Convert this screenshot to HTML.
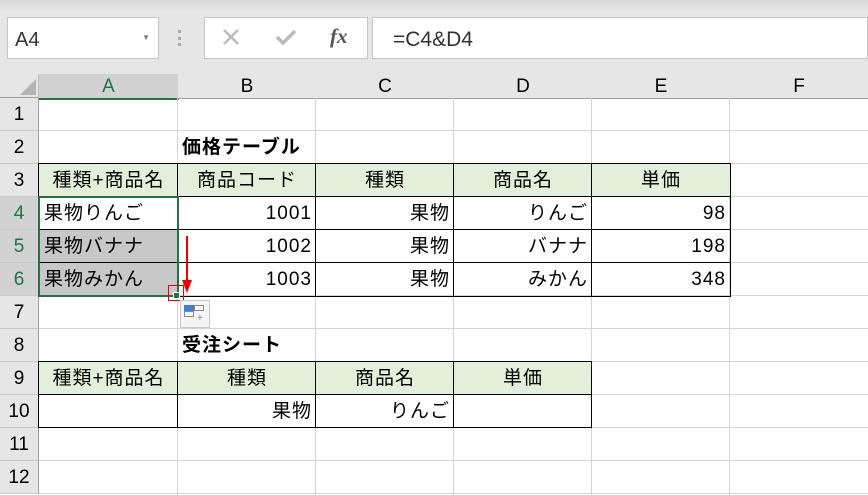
<!DOCTYPE html><html><head><meta charset="utf-8"><style>
body{margin:0;width:868px;height:495px;overflow:hidden;background:#fff;font-family:"Liberation Sans","Noto Sans CJK JP",sans-serif;position:relative}
.a{position:absolute;box-sizing:border-box}
.t{position:absolute;box-sizing:border-box;font-size:19px;line-height:33px;height:33px;white-space:nowrap;color:#000;padding:0 4px;letter-spacing:1px}
.ch{position:absolute;top:74px;height:24px;line-height:25px;text-align:center;font-size:19px;border-right:1px solid #bdbdbd;border-bottom:1px solid #9e9e9e;background:#e6e6e6}
.rh{position:absolute;left:0;width:39px;height:33px;line-height:33px;text-align:center;font-size:19px;background:#e6e6e6;border-bottom:1px solid #c8c8c8;border-right:1px solid #9e9e9e;box-sizing:border-box}
.hv{position:absolute;top:98px;width:1px;height:397px;background:#d4d4d4}
.hh{position:absolute;left:39px;width:829px;height:1px;background:#d4d4d4}
</style></head><body>
<div class="a" style="left:0;top:0;width:868px;height:74px;background:linear-gradient(#d9d9d9,#e6e6e6 12px)"></div>
<div class="a" style="left:7px;top:17px;width:152px;height:42px;background:#fff;border:1px solid #c6c6c6;font-size:20px;line-height:44px;padding-left:7px;color:#333">A4<span style="position:absolute;right:8px;top:0;font-size:8px;line-height:40px;color:#777">▼</span></div>
<div class="a" style="left:178px;top:30px;width:3px;height:16px;border-left:3px dotted #aaa"></div>
<div class="a" style="left:204px;top:17px;width:164px;height:42px;background:#fff;border:1px solid #c6c6c6"></div>
<svg class="a" style="left:223px;top:29px" width="16" height="16"><path d="M1 1L15 15M15 1L1 15" stroke="#bbb" stroke-width="2.5"/></svg>
<svg class="a" style="left:276px;top:29px" width="20" height="16"><path d="M1 8L7 14L19 2" stroke="#bbb" stroke-width="3.5" fill="none"/></svg>
<div class="a" style="left:330px;top:24px;font-size:21px;font-family:'Liberation Serif',serif;font-style:italic;font-weight:bold;color:#555">fx</div>
<div class="a" style="left:372px;top:17px;width:496px;height:42px;background:#fff;border:1px solid #c6c6c6;font-size:21px;line-height:44px;padding-left:20px;color:#333">=C4&amp;D4</div>
<div class="a" style="left:0;top:74px;width:39px;height:24px;background:#e6e6e6;border-right:1px solid #bdbdbd;border-bottom:1px solid #9e9e9e"></div>
<div class="a" style="left:20px;top:79px;width:0;height:0;border-left:16px solid transparent;border-bottom:16px solid #b4b4b4"></div>
<div class="ch" style="left:39px;width:139px;background:#d2d2d2;color:#217346;border-bottom:2px solid #217346">A</div>
<div class="ch" style="left:178px;width:138px">B</div>
<div class="ch" style="left:316px;width:138px">C</div>
<div class="ch" style="left:454px;width:138px">D</div>
<div class="ch" style="left:592px;width:138px">E</div>
<div class="ch" style="left:730px;width:138px">F</div>
<div class="rh" style="top:98px">1</div><div class="rh" style="top:131px">2</div><div class="rh" style="top:164px">3</div>
<div class="rh" style="top:197px;background:#d2d2d2;color:#217346">4</div><div class="rh" style="top:230px;background:#d2d2d2;color:#217346">5</div><div class="rh" style="top:263px;background:#d2d2d2;color:#217346">6</div>
<div class="rh" style="top:296px">7</div><div class="rh" style="top:329px">8</div><div class="rh" style="top:362px">9</div><div class="rh" style="top:395px">10</div><div class="rh" style="top:428px">11</div><div class="rh" style="top:461px">12</div>
<div class="hv" style="left:177px"></div><div class="hv" style="left:315px"></div><div class="hv" style="left:453px"></div><div class="hv" style="left:591px"></div><div class="hv" style="left:729px"></div>
<div class="hh" style="top:130px"></div><div class="hh" style="top:163px"></div><div class="hh" style="top:196px"></div><div class="hh" style="top:229px"></div><div class="hh" style="top:262px"></div><div class="hh" style="top:295px"></div><div class="hh" style="top:328px"></div><div class="hh" style="top:361px"></div><div class="hh" style="top:394px"></div><div class="hh" style="top:427px"></div><div class="hh" style="top:460px"></div><div class="hh" style="top:493px"></div>
<div class="a" style="left:39px;top:164px;width:691px;height:33px;background:#e2efda"></div>
<div class="a" style="left:40px;top:230px;width:138px;height:66px;background:#c8c8c8"></div>
<div class="a" style="left:38px;top:163px;width:693px;height:134px;border:1px solid #000"></div>
<div class="a" style="left:38px;top:196px;width:693px;height:1px;background:#000"></div>
<div class="a" style="left:38px;top:229px;width:693px;height:1px;background:#000"></div>
<div class="a" style="left:38px;top:262px;width:693px;height:1px;background:#000"></div>
<div class="a" style="left:177px;top:163px;width:1px;height:134px;background:#000"></div>
<div class="a" style="left:315px;top:163px;width:1px;height:134px;background:#000"></div>
<div class="a" style="left:453px;top:163px;width:1px;height:134px;background:#000"></div>
<div class="a" style="left:591px;top:163px;width:1px;height:134px;background:#000"></div>
<div class="t" style="left:178px;top:131px;font-weight:bold">価格テーブル</div>
<div class="t" style="left:39px;top:164px;width:139px;text-align:center">種類+商品名</div>
<div class="t" style="left:178px;top:164px;width:138px;text-align:center">商品コード</div>
<div class="t" style="left:316px;top:164px;width:138px;text-align:center">種類</div>
<div class="t" style="left:454px;top:164px;width:138px;text-align:center">商品名</div>
<div class="t" style="left:592px;top:164px;width:138px;text-align:center">単価</div>
<div class="t" style="left:40px;top:197px">果物りんご</div><div class="t" style="left:40px;top:230px">果物バナナ</div><div class="t" style="left:40px;top:263px">果物みかん</div>
<div class="t" style="left:178px;top:197px;width:138px;text-align:right">1001</div><div class="t" style="left:178px;top:230px;width:138px;text-align:right">1002</div><div class="t" style="left:178px;top:263px;width:138px;text-align:right">1003</div>
<div class="t" style="left:316px;top:197px;width:138px;text-align:right">果物</div><div class="t" style="left:316px;top:230px;width:138px;text-align:right">果物</div><div class="t" style="left:316px;top:263px;width:138px;text-align:right">果物</div>
<div class="t" style="left:454px;top:197px;width:138px;text-align:right">りんご</div><div class="t" style="left:454px;top:230px;width:138px;text-align:right">バナナ</div><div class="t" style="left:454px;top:263px;width:138px;text-align:right">みかん</div>
<div class="t" style="left:592px;top:197px;width:138px;text-align:right">98</div><div class="t" style="left:592px;top:230px;width:138px;text-align:right">198</div><div class="t" style="left:592px;top:263px;width:138px;text-align:right">348</div>
<div class="a" style="left:38px;top:196px;width:141px;height:101px;border:2px solid #217346"></div>
<div class="a" style="left:173px;top:292px;width:7px;height:7px;background:#217346;border:1px solid #fff"></div>
<div class="a" style="left:168px;top:285px;width:16px;height:16px;border:1px solid #e00"></div>
<div class="a" style="left:186px;top:236px;width:2px;height:48px;background:#e00"></div>
<div class="a" style="left:182px;top:280px;width:0;height:0;border-left:5px solid transparent;border-right:5px solid transparent;border-top:13px solid #e00"></div>
<div class="a" style="left:180px;top:300px;width:30px;height:28px;border:1px solid #c8c8c8;background:#f5f5f5"></div>
<div class="a" style="left:184px;top:305px;width:10px;height:6px;background:#3b7ddd"></div>
<div class="a" style="left:194px;top:305px;width:10px;height:6px;border:1px solid #888"></div>
<div class="a" style="left:184px;top:311px;width:10px;height:6px;border:1px solid #888"></div>
<div class="a" style="left:197px;top:313px;font-size:10px;color:#888">+</div>
<div class="t" style="left:178px;top:329px;font-weight:bold">受注シート</div>
<div class="a" style="left:39px;top:362px;width:553px;height:33px;background:#e2efda"></div>
<div class="a" style="left:38px;top:361px;width:554px;height:67px;border:1px solid #000"></div>
<div class="a" style="left:38px;top:394px;width:554px;height:1px;background:#000"></div>
<div class="a" style="left:177px;top:361px;width:1px;height:67px;background:#000"></div>
<div class="a" style="left:315px;top:361px;width:1px;height:67px;background:#000"></div>
<div class="a" style="left:453px;top:361px;width:1px;height:67px;background:#000"></div>
<div class="t" style="left:39px;top:362px;width:139px;text-align:center">種類+商品名</div>
<div class="t" style="left:178px;top:362px;width:138px;text-align:center">種類</div>
<div class="t" style="left:316px;top:362px;width:138px;text-align:center">商品名</div>
<div class="t" style="left:454px;top:362px;width:138px;text-align:center">単価</div>
<div class="t" style="left:178px;top:395px;width:138px;text-align:right">果物</div>
<div class="t" style="left:316px;top:395px;width:138px;text-align:right">りんご</div>
</body></html>
